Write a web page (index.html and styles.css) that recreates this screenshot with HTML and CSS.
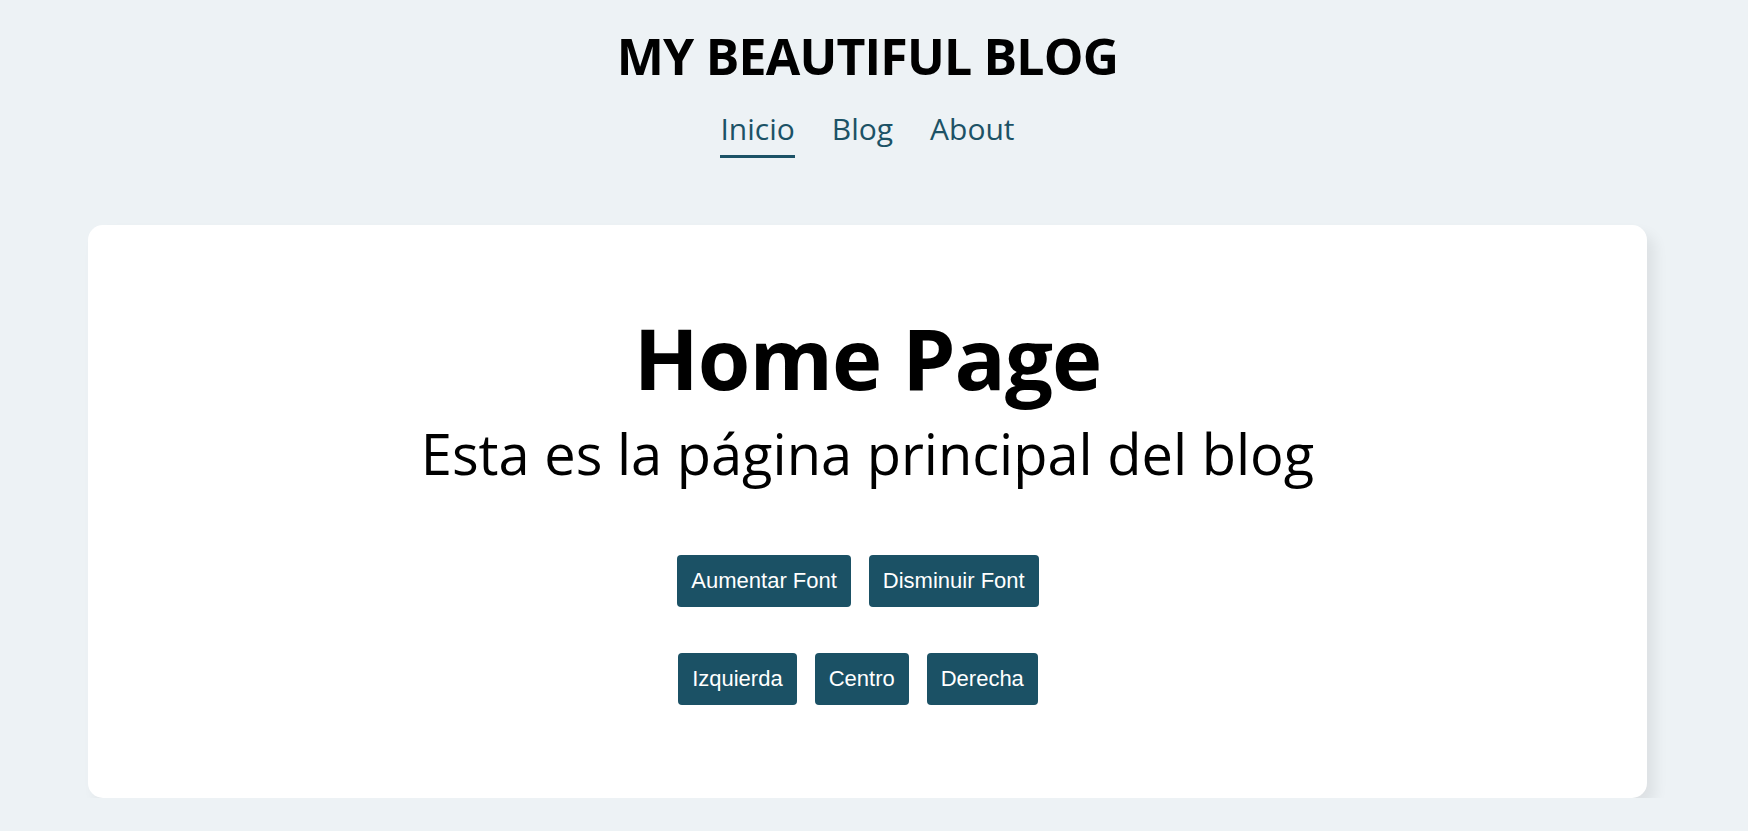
FILE: index.html
```html
<!DOCTYPE html>
<html lang="es">
<head>
<meta charset="utf-8">
<title>My Beautiful Blog</title>
<link rel="stylesheet" href="styles.css">
</head>
<body>
<div class="page">
  <header class="site-header">
    <h1 class="site-title">MY BEAUTIFUL BLOG</h1>
    <nav class="nav">
      <a class="nav-link active" href="#">Inicio</a>
      <a class="nav-link" href="#">Blog</a>
      <a class="nav-link" href="#">About</a>
    </nav>
  </header>
  <main class="card">
    <h2 class="hero-title">Home Page</h2>
    <p class="hero-sub">Esta es la página principal del blog</p>
    <div class="btn-row row-font">
      <button class="btn">Aumentar Font</button>
      <button class="btn">Disminuir Font</button>
    </div>
    <div class="btn-row row-align">
      <button class="btn">Izquierda</button>
      <button class="btn">Centro</button>
      <button class="btn">Derecha</button>
    </div>
  </main>
</div>
</body>
</html>
```
FILE: styles.css
```css
html, body {
  margin: 0;
  padding: 0;
  background: #edf2f5;
}
body {
  font-family: "Open Sans", "Noto Sans", sans-serif;
  color: #000;
}
.page {
  padding-right: 13px;
  padding-top: 21px;
}
.site-header {
  display: flex;
  flex-direction: column;
  align-items: center;
}
.site-title {
  margin: 0;
  font-size: 50px;
  font-weight: 700;
  line-height: 70px;
  letter-spacing: -0.8px;
}
.nav {
  display: flex;
  gap: 37px;
  margin-top: 18px;
}
.nav-link {
  font-size: 30px;
  line-height: 40px;
  color: #1c5266;
  text-decoration: none;
  padding-bottom: 6px;
  border-bottom: 3px solid transparent;
}
.nav-link.active {
  border-bottom-color: #1c5266;
}
.card {
  margin: 67px 88px 0 88px;
  background: #fff;
  border-radius: 15px;
  box-shadow: 8px 9px 14px rgba(0, 0, 0, 0.07);
  padding: 72px 20px 93px;
  display: flex;
  flex-direction: column;
  align-items: center;
}
.hero-title {
  margin: 0;
  font-size: 85px;
  font-weight: 700;
  line-height: 120px;
  letter-spacing: -1px;
}
.hero-sub {
  margin: 0;
  font-size: 56px;
  font-weight: 400;
  line-height: 72px;
}
.btn-row {
  display: flex;
  gap: 18px;
  justify-content: center;
  padding-right: 19px;
}
.row-font {
  margin-top: 66px;
}
.row-align {
  margin-top: 46px;
}
.btn {
  font-family: "Liberation Sans", Arial, sans-serif;
  font-size: 22px;
  line-height: 26px;
  color: #fff;
  background: #1b5165;
  border: none;
  border-radius: 4px;
  padding: 13px 14px;
  cursor: pointer;
}
```
